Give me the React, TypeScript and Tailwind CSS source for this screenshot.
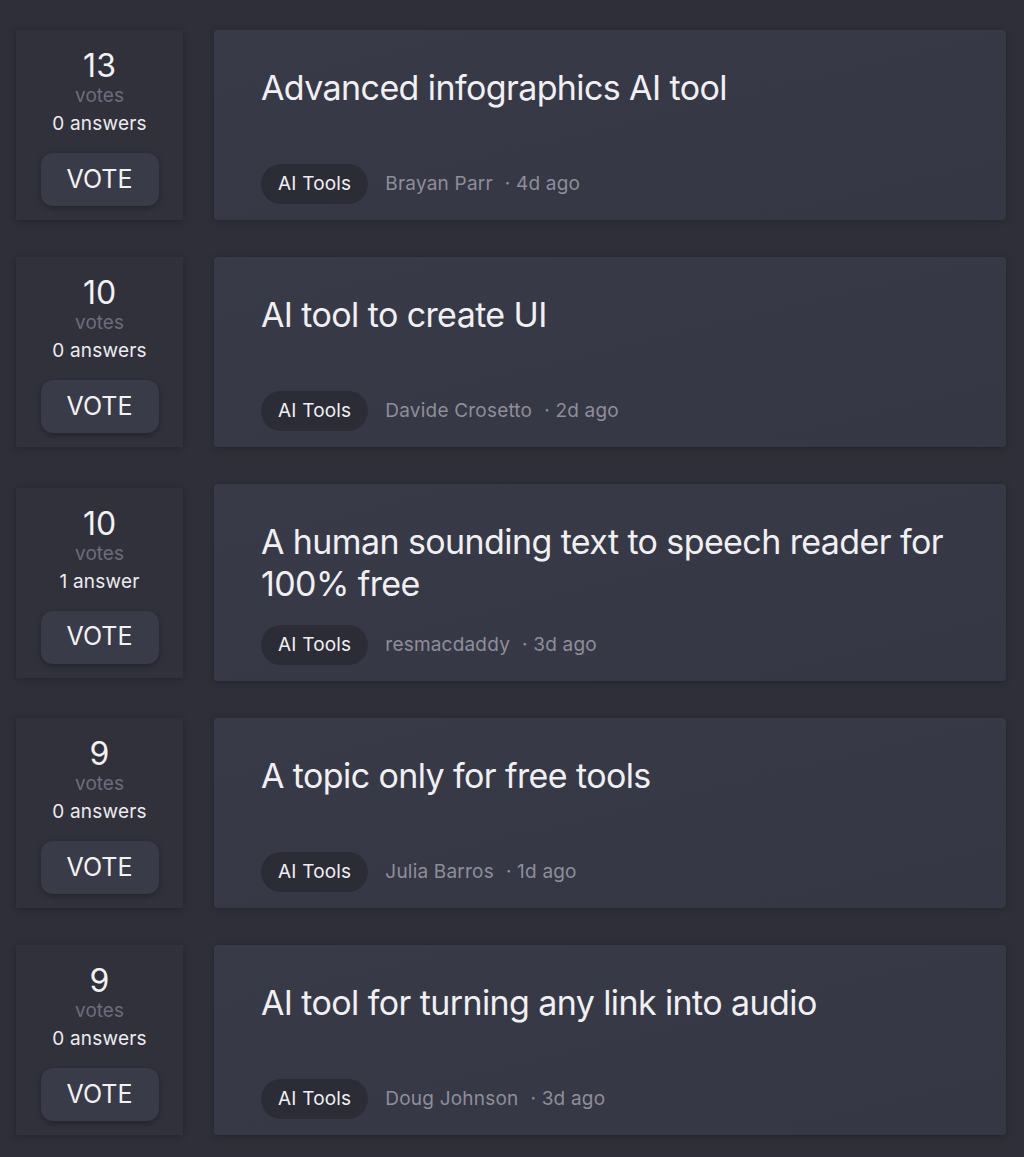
const posts = [
  { votes: 13, answers: "0 answers", title: "Advanced infographics AI tool", author: "Brayan Parr", ago: "4d ago" },
  { votes: 10, answers: "0 answers", title: "AI tool to create UI", author: "Davide Crosetto", ago: "2d ago" },
  { votes: 10, answers: "1 answer", title: "A human sounding text to speech reader for 100% free", author: "resmacdaddy", ago: "3d ago" },
  { votes: 9, answers: "0 answers", title: "A topic only for free tools", author: "Julia Barros", ago: "1d ago" },
  { votes: 9, answers: "0 answers", title: "AI tool for turning any link into audio", author: "Doug Johnson", ago: "3d ago" },
];

function PostRow({ post }: { post: (typeof posts)[number] }) {
  return (
    <div className="flex items-center gap-[31px]">
      <div className="w-[167px] h-[190px] shrink-0 flex flex-col items-center pt-[19px] bg-[#31313c] shadow-[0_1px_6px_rgba(0,0,0,0.25)]">
        <div className="text-[32px] leading-[34px] text-[#f2f2f5]">{post.votes}</div>
        <div className="text-[19px] leading-[26px] text-[#6c6c7a]">votes</div>
        <div className="text-[19px] leading-[30px] text-[#ececf0] tracking-[0.2px]">{post.answers}</div>
        <button className="mt-[14px] w-[118px] h-[53px] rounded-xl bg-[#3a3b48] text-[25px] text-[#f2f2f5] shadow-[0_2px_6px_rgba(0,0,0,0.3)]">
          VOTE
        </button>
      </div>
      <div className="flex-1 min-h-[190px] flex flex-col justify-between pt-[37px] pb-4 px-[47px] rounded bg-gradient-to-br from-[#393a47] to-[#363744] shadow-[0_1px_6px_rgba(0,0,0,0.25)]">
        <h2 className="text-[34px] leading-[42px] text-[#f0f0f4] tracking-[-0.6px]">{post.title}</h2>
        <div className="mt-5 flex items-center text-[19px]">
          <span className="h-10 px-[17px] flex items-center rounded-full bg-[#2c2c36] text-[#f0f0f4] tracking-[0.2px]">AI Tools</span>
          <span className="ml-[17px] text-[#8e8e9b] tracking-[0.2px]">{post.author}</span>
          <span className="ml-3 text-[#8e8e9b] tracking-[0.2px]">· {post.ago}</span>
        </div>
      </div>
    </div>
  );
}

export default function App() {
  return (
    <div className="min-h-[1157px] bg-[#2f2f39] pt-[30px] pl-4 pr-[18px] flex flex-col gap-[37px]" style={{ fontFamily: "Inter, 'Noto Sans', sans-serif" }}>
      {posts.map((p) => (
        <PostRow key={p.title} post={p} />
      ))}
    </div>
  );
}
